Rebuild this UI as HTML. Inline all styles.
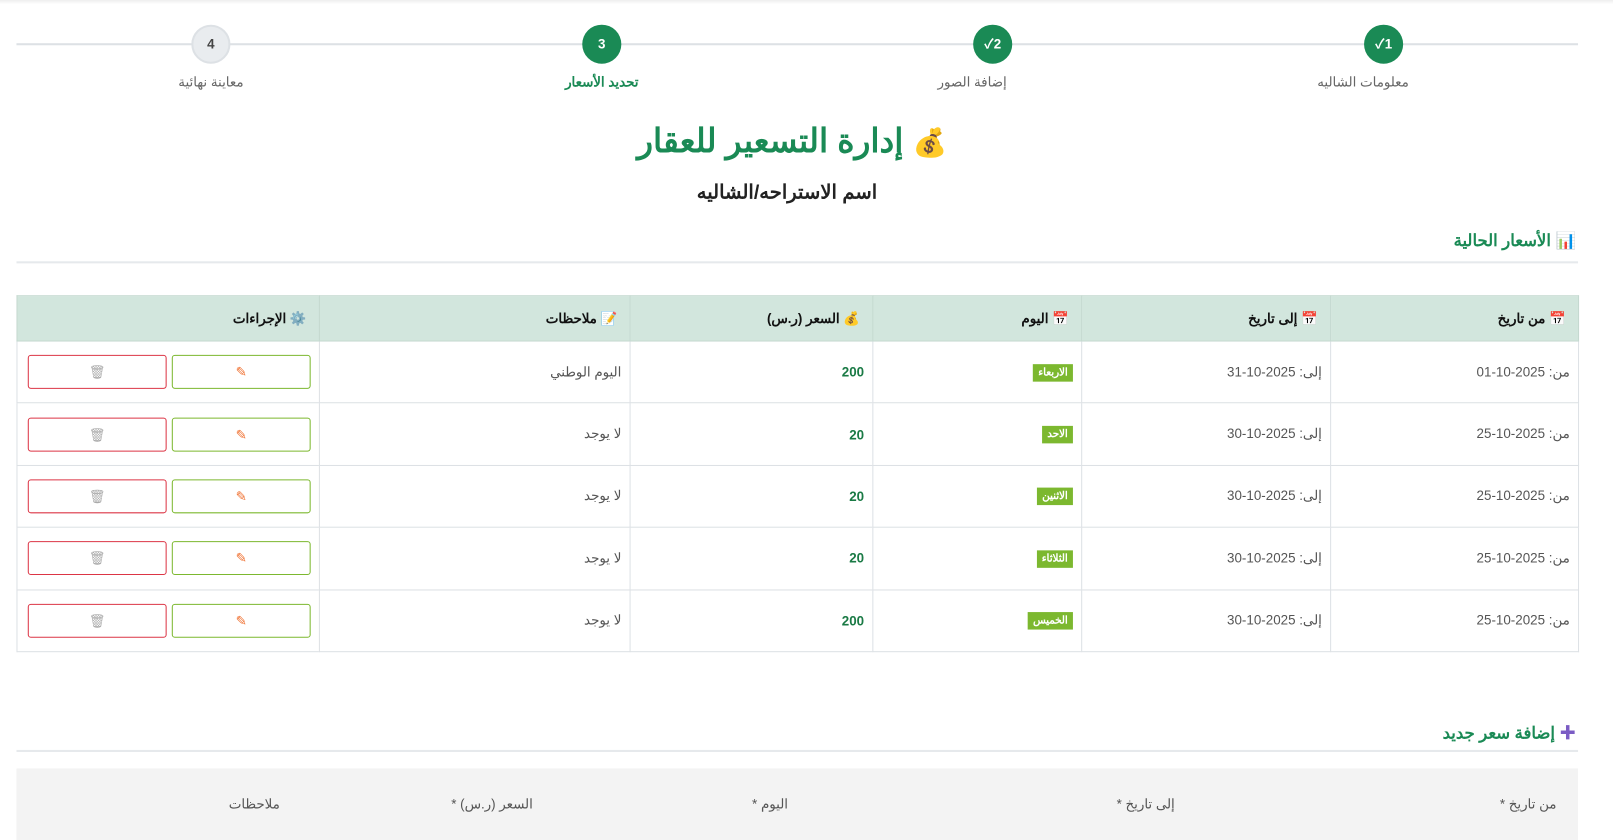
<!DOCTYPE html>
<html dir="rtl"><head><meta charset="utf-8"><style>
*{margin:0;padding:0;box-sizing:border-box}
body{width:1613px;height:816px;overflow:hidden;background:#fff;font-family:"Liberation Sans","Noto Sans CJK SC",sans-serif;color:#333}
#w{position:absolute;left:0;top:0;width:1568px;height:794px;transform:scale(1.0287);transform-origin:0 0}
.a{position:absolute}
.topsh{left:0;top:0;width:1568px;height:4px;background:linear-gradient(#eee,#fff)}
.line{left:16px;top:42px;width:1518px;height:2px;background:#dde1e5}
.c{width:38px;height:38px;border-radius:50%;top:24px;color:#fff;font-weight:bold;font-size:13px;text-align:center;line-height:38px;background:#1a8a55;direction:ltr}
.lbl{top:72px;font-size:13px;color:#666;width:200px;text-align:center}
h1{position:absolute;left:0;width:1540px;top:118px;text-align:center;font-size:32px;color:#1a8a55;font-weight:bold}
h2{position:absolute;left:0;width:1530px;top:176px;text-align:center;font-size:19px;color:#222;font-weight:bold}
.sec{right:36px;font-size:16px;font-weight:bold;color:#1a8a55}
.hr{left:16px;width:1518px;height:2px;background:#e6e9ec}
table{position:absolute;left:16px;top:287px;width:1519px;border-collapse:collapse;font-size:13px}
th{background:#d2e6dd;height:44px;text-align:right;padding:0 12px;border:1px solid #c5d9d0;font-size:13px;color:#111}
td{height:60.4px;border:1px solid #dde1e5;padding:0 8px;text-align:right;color:#555}
.p{color:#1a7a45;font-weight:bold}
.b{background:#7cb82f;color:#fff;font-size:10px;font-weight:bold;padding:3px 5px;display:inline-block}
.btn{display:inline-block;width:135px;height:33px;border:1px solid #7cb82f;border-radius:3px;vertical-align:middle;text-align:center;line-height:31px;font-size:13px}
.del{border-color:#dc3545;margin-right:5px;color:#aaa}
.form{left:16px;top:747px;width:1518px;height:70px;background:#f3f3f3}
.fl{top:774px;font-size:13px;color:#555}
</style></head><body><div id="w">
<div class="a topsh"></div>
<div class="a line"></div>
<div class="a c" style="left:1326px">✓1</div>
<div class="a c" style="left:946px">✓2</div>
<div class="a c" style="left:566px">3</div>
<div class="a c" style="left:186px;background:#e9ecef;color:#444;border:2px solid #dde1e5;line-height:34px">4</div>
<div class="a lbl" style="left:1225px">معلومات الشاليه</div>
<div class="a lbl" style="left:845px">إضافة الصور</div>
<div class="a lbl" style="left:485px;color:#1a8a55;font-weight:bold">تحديد الأسعار</div>
<div class="a lbl" style="left:105px">معاينة نهائية</div>
<h1><span style="font-size:27px">💰</span> إدارة التسعير للعقار</h1>
<h2>اسم الاستراحه/الشاليه</h2>
<div class="a sec" style="top:224px">📊 الأسعار الحالية</div>
<div class="a hr" style="top:254px"></div>
<table>
<tr><th style="width:241px">📅 من تاريخ</th><th style="width:242px">📅 إلى تاريخ</th><th style="width:203px">📅 اليوم</th><th style="width:236px">💰 السعر (ر.س)</th><th style="width:302px">📝 ملاحظات</th><th>⚙️ الإجراءات</th></tr>
<tr><td>من: 2025-10-01</td><td>إلى: 2025-10-31</td><td><span class="b">الاربعاء</span></td><td class="p">200</td><td>اليوم الوطني</td><td><span class="btn" style="color:#f07030">✎</span><span class="btn del">🗑</span></td></tr>
<tr><td>من: 2025-10-25</td><td>إلى: 2025-10-30</td><td><span class="b">الاحد</span></td><td class="p">20</td><td>لا يوجد</td><td><span class="btn" style="color:#f07030">✎</span><span class="btn del">🗑</span></td></tr>
<tr><td>من: 2025-10-25</td><td>إلى: 2025-10-30</td><td><span class="b">الاثنين</span></td><td class="p">20</td><td>لا يوجد</td><td><span class="btn" style="color:#f07030">✎</span><span class="btn del">🗑</span></td></tr>
<tr><td>من: 2025-10-25</td><td>إلى: 2025-10-30</td><td><span class="b">الثلاثاء</span></td><td class="p">20</td><td>لا يوجد</td><td><span class="btn" style="color:#f07030">✎</span><span class="btn del">🗑</span></td></tr>
<tr><td>من: 2025-10-25</td><td>إلى: 2025-10-30</td><td><span class="b">الخميس</span></td><td class="p">200</td><td>لا يوجد</td><td><span class="btn" style="color:#f07030">✎</span><span class="btn del">🗑</span></td></tr>
</table>
<div class="a sec" style="top:699px"><span style="color:#7b5cc4">✚</span> إضافة سعر جديد</div>
<div class="a hr" style="top:729px"></div>
<div class="a form"></div>
<div class="a fl" style="right:55px">من تاريخ *</div>
<div class="a fl" style="right:426px">إلى تاريخ *</div>
<div class="a fl" style="right:802px">اليوم *</div>
<div class="a fl" style="right:1050px">السعر (ر.س) *</div>
<div class="a fl" style="right:1296px">ملاحظات</div>
</div></body></html>
